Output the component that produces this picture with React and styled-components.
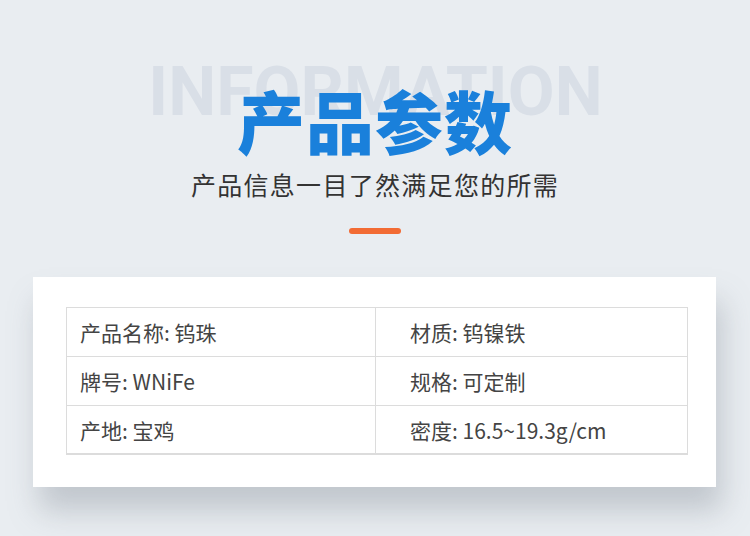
import React from "react";
import styled, { createGlobalStyle } from "styled-components";

const GlobalStyle = createGlobalStyle`
  html, body {
    margin: 0;
    padding: 0;
    background: #e9edf1;
  }
  body {
    font-family: "Noto Sans CJK SC", "Noto Sans", sans-serif;
  }
`;

const rows = [
  ["产品名称: 钨珠", "材质: 钨镍铁"],
  ["牌号: WNiFe", "规格: 可定制"],
  ["产地: 宝鸡", "密度: 16.5~19.3g/cm"],
];

const App = () => {
  return (
    <Page>
      <GlobalStyle />
      <Header>
        <Watermark>INFORMATION</Watermark>
        <Title>产品参数</Title>
      </Header>
      <Subtitle>产品信息一目了然满足您的所需</Subtitle>
      <Bar />
      <Card>
        <Table>
          {rows.map((row, i) => (
            <Row key={i} $last={i === rows.length - 1}>
              <Cell>{row[0]}</Cell>
              <Cell $right>{row[1]}</Cell>
            </Row>
          ))}
        </Table>
      </Card>
    </Page>
  );
};

export default App;

const Page = styled.div`
  width: 750px;
  height: 536px;
  overflow: hidden;
  background: #e9edf1;
  display: flex;
  flex-direction: column;
  align-items: center;
`;

const Header = styled.div`
  position: relative;
  width: 100%;
  height: 158px;
  display: flex;
  justify-content: center;
`;

const Watermark = styled.div`
  position: absolute;
  top: 52px;
  left: 0;
  right: 0;
  text-align: center;
  font-family: Roboto, "Noto Sans", sans-serif;
  font-weight: 700;
  font-size: 68px;
  letter-spacing: 0px;
  color: #d9dfe7;
  line-height: 80px;
  padding-left: 1px;
`;

const Title = styled.h1`
  position: relative;
  margin: 0;
  padding-top: 80px;
  font-family: "Noto Sans CJK SC", sans-serif;
  font-weight: 900;
  font-size: 68px;
  line-height: 80px;
  letter-spacing: 1px;
  color: #1a80db;
`;

const Subtitle = styled.div`
  margin-top: 8px;
  font-size: 25px;
  line-height: 36px;
  letter-spacing: 1.3px;
  color: #333;
`;

const Bar = styled.div`
  width: 52px;
  height: 6px;
  margin-top: 26px;
  border-radius: 3px;
  background: #f26b34;
`;

const Card = styled.div`
  width: 683px;
  height: 210px;
  margin-top: 43px;
  margin-left: -1px;
  box-sizing: border-box;
  padding: 30px 28px 0 33px;
  background: #fff;
  box-shadow: 6px 24px 28px rgba(120, 130, 140, 0.35);
`;

const Table = styled.div`
  border: 1px solid #dcdcdc;
  border-bottom-width: 2px;
`;

const Row = styled.div`
  display: grid;
  grid-template-columns: 308px 1fr;
  height: ${(p) => (p.$last ? "47px" : "48px")};
  border-bottom: ${(p) => (p.$last ? "none" : "1px solid #dcdcdc")};
`;

const Cell = styled.div`
  display: flex;
  align-items: center;
  padding-left: ${(p) => (p.$right ? "34px" : "13px")};
  border-left: ${(p) => (p.$right ? "1px solid #dcdcdc" : "none")};
  font-size: 21px;
  color: #444;
  white-space: pre;
`;
